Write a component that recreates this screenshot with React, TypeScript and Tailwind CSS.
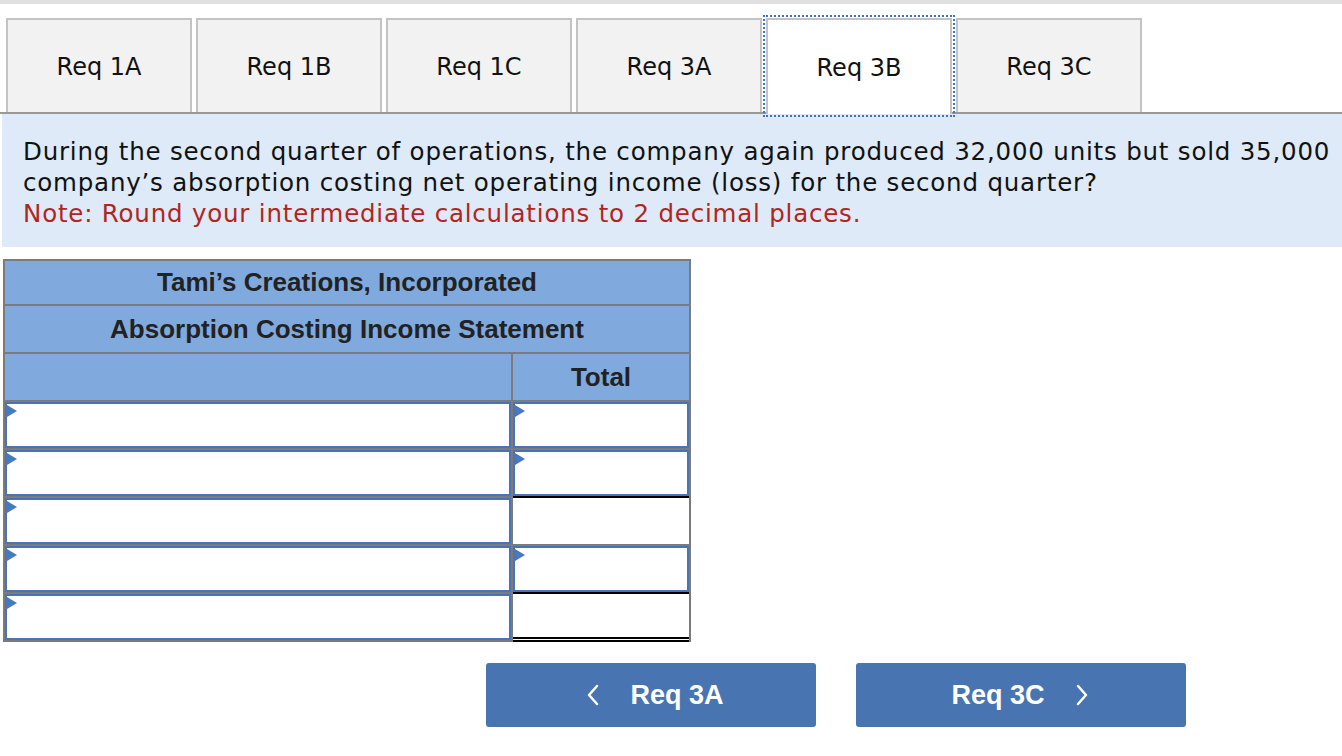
import React from "react";

const tabs = ["Req 1A", "Req 1B", "Req 1C", "Req 3A", "Req 3B", "Req 3C"];

function Tri() {
  return (
    <span className="absolute left-[0px] top-[1px] w-0 h-0 border-l-[10px] border-l-[#4a78be] border-y-[6px] border-y-transparent" />
  );
}

function InputCell({ className = "" }: { className?: string }) {
  return (
    <div className={"relative h-full w-full border-2 border-[#4a74b4] bg-white " + className}>
      <Tri />
    </div>
  );
}

type Row = { right: "input" | "plain"; bottom: "gray" | "black" | "double" };

const rows: Row[] = [
  { right: "input", bottom: "gray" },
  { right: "input", bottom: "black" },
  { right: "plain", bottom: "gray" },
  { right: "input", bottom: "black" },
  { right: "plain", bottom: "double" },
];

export default function App() {
  return (
    <div className="w-[1342px] h-[756px] overflow-hidden bg-white" style={{ fontFamily: '"DejaVu Sans", Verdana, sans-serif' }}>
      <div className="h-[4px] bg-[#e0e0e0]" />
      {/* tabs */}
      <div className="mt-[14px] flex gap-[4px] pl-[6px] border-b-2 border-[#999999] h-[96px]">
        {tabs.map((t) =>
          t === "Req 3B" ? (
            <div
              key={t}
              className="relative w-[186px] h-[96px] -mb-[2px] border-2 border-b-0 border-[#c3c3c3] bg-white flex items-center justify-center pt-[2px] text-[24px] text-[#111] outline-2 outline-dotted outline-[#3f72bf] outline-offset-[1px]"
            >
              {t}
            </div>
          ) : (
            <div
              key={t}
              className="w-[186px] h-[94px] border-2 border-b-0 border-[#c3c3c3] bg-[#f2f2f2] flex items-center justify-center pt-[2px] text-[24px] text-[#111]"
            >
              {t}
            </div>
          )
        )}
      </div>
      {/* question */}
      <div className="ml-[2px] bg-[#deeaf7] pt-[22px] pb-[18px] pl-[21px] text-[24.5px] tracking-[0.8px] leading-[31px] text-[#111] whitespace-nowrap overflow-hidden">
        <div>During the second quarter of operations, the company again produced 32,000 units but sold 35,000</div>
        <div>company’s absorption costing net operating income (loss) for the second quarter?</div>
        <div className="text-[#b1251e]">Note: Round your intermediate calculations to 2 decimal places.</div>
      </div>
      {/* table */}
      <div
        className="ml-[3px] mt-[12px] w-[688px] border-2 border-b-0 border-[#7b7b7b]"
        style={{ fontFamily: '"Liberation Sans", Arial, sans-serif' }}
      >
        <div className="h-[45px] bg-[#80aade] border-b-2 border-[#7b7b7b] flex items-center justify-center font-bold text-[26px] text-[#222]">
          Tami’s Creations, Incorporated
        </div>
        <div className="h-[48px] bg-[#80aade] border-b-2 border-[#7b7b7b] flex items-center justify-center font-bold text-[26px] text-[#222]">
          Absorption Costing Income Statement
        </div>
        <div className="h-[48px] bg-[#80aade] border-b-2 border-[#7b7b7b] flex">
          <div className="w-[508px] border-r-2 border-[#7b7b7b]" />
          <div className="flex-1 flex items-center justify-center font-bold text-[26px] text-[#222]">Total</div>
        </div>
        {rows.map((r, i) => (
          <div key={i} className="h-[48px] flex">
            <div className="w-[508px] border-r-2 border-b-2 border-[#7b7b7b]">
              <InputCell />
            </div>
            <div
              className={
                "flex-1 " +
                (r.bottom === "gray"
                  ? "border-b-2 border-[#7b7b7b]"
                  : r.bottom === "black"
                  ? "border-b-2 border-black"
                  : "border-b-[5px] border-double border-black")
              }
            >
              {r.right === "input" ? <InputCell /> : <div className="h-full bg-white" />}
            </div>
          </div>
        ))}
      </div>
      {/* buttons */}
      <div
        className="mt-[21px] ml-[486px] flex gap-[40px]"
        style={{ fontFamily: '"Liberation Sans", Arial, sans-serif' }}
      >
        <div className="w-[330px] h-[64px] rounded-[3px] bg-[#4874b2] flex items-center justify-center gap-[30px] pl-[8px] text-white font-bold text-[27px]">
          <svg width="14" height="22" viewBox="0 0 14 22" fill="none" stroke="white" strokeWidth="2.5" strokeLinecap="round" strokeLinejoin="round">
            <path d="M11 2 L3 11 L11 20" />
          </svg>
          <span>Req 3A</span>
        </div>
        <div className="w-[330px] h-[64px] rounded-[3px] bg-[#4874b2] flex items-center justify-center gap-[30px] pr-[2px] text-white font-bold text-[27px]">
          <span>Req 3C</span>
          <svg width="14" height="22" viewBox="0 0 14 22" fill="none" stroke="white" strokeWidth="2.5" strokeLinecap="round" strokeLinejoin="round">
            <path d="M3 2 L11 11 L3 20" />
          </svg>
        </div>
      </div>
    </div>
  );
}
